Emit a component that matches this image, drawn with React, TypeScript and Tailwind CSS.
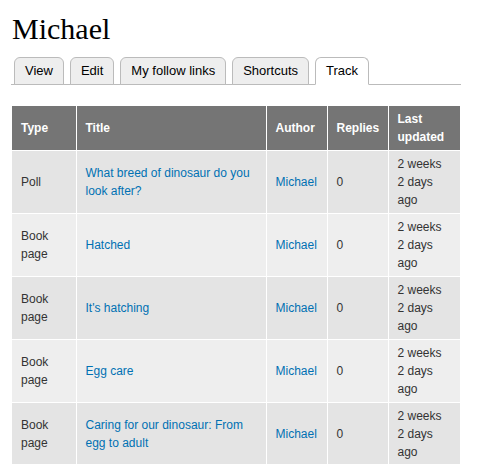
const tabs = ["View", "Edit", "My follow links", "Shortcuts", "Track"];

const rows = [
  { type: "Poll", title: "What breed of dinosaur do you look after?" },
  { type: "Book page", title: "Hatched" },
  { type: "Book page", title: "It's hatching" },
  { type: "Book page", title: "Egg care" },
  { type: "Book page", title: "Caring for our dinosaur: From egg to adult" },
];

export default function App() {
  return (
    <div className="min-h-screen bg-white px-[11px] pt-[12px] font-['Liberation_Sans',Arial,sans-serif] text-[#333]">
      <h1 className="m-0 pl-px font-['Liberation_Serif','Times_New_Roman',serif] text-[30px] leading-[34px] font-normal text-black">
        Michael
      </h1>

      <ul className="mt-[11px] flex w-[450px] gap-[6px] border-b border-[#bbb] pl-[3px]">
        {tabs.map((t) => {
          const active = t === "Track";
          return (
            <li
              key={t}
              className={
                "-mb-px flex h-[28px] items-center rounded-t-[6px] border border-[#bbb] px-[10px] text-[13px] " +
                (active ? "border-b-white bg-white text-black" : "border-b-[#bbb] bg-[#eeeeee] text-black")
              }
            >
              {t}
            </li>
          );
        })}
      </ul>

      <table className="mt-[21px] ml-px w-[448px] table-fixed border-collapse text-[12px] leading-[18px]">
        <colgroup>
          <col className="w-[64px]" />
          <col className="w-[190px]" />
          <col className="w-[61px]" />
          <col className="w-[61px]" />
          <col className="w-[72px]" />
        </colgroup>
        <thead>
          <tr className="bg-[#757575] text-left text-white">
            <th className="border-r border-white px-[9px] py-[4px] font-bold">Type</th>
            <th className="border-r border-white px-[9px] py-[4px] font-bold">Title</th>
            <th className="border-r border-white px-[9px] py-[4px] font-bold">Author</th>
            <th className="border-r border-white px-[9px] py-[4px] font-bold">Replies</th>
            <th className="px-[9px] py-[4px] font-bold">Last updated</th>
          </tr>
        </thead>
        <tbody>
          {rows.map((r, i) => (
            <tr key={r.title} className={i % 2 === 0 ? "bg-[#e4e4e4]" : "bg-[#eeeeee]"}>
              <td className="border-t border-r border-white px-[9px] py-[4px]">{r.type}</td>
              <td className="border-t border-r border-white px-[9px] py-[4px]">
                <a href="#" className="text-[#0071b3]">{r.title}</a>
              </td>
              <td className="border-t border-r border-white px-[9px] py-[4px]">
                <a href="#" className="text-[#0071b3]">Michael</a>
              </td>
              <td className="border-t border-r border-white px-[9px] py-[4px]">0</td>
              <td className="border-t border-white px-[9px] py-[4px]">2 weeks 2 days ago</td>
            </tr>
          ))}
        </tbody>
      </table>
    </div>
  );
}
